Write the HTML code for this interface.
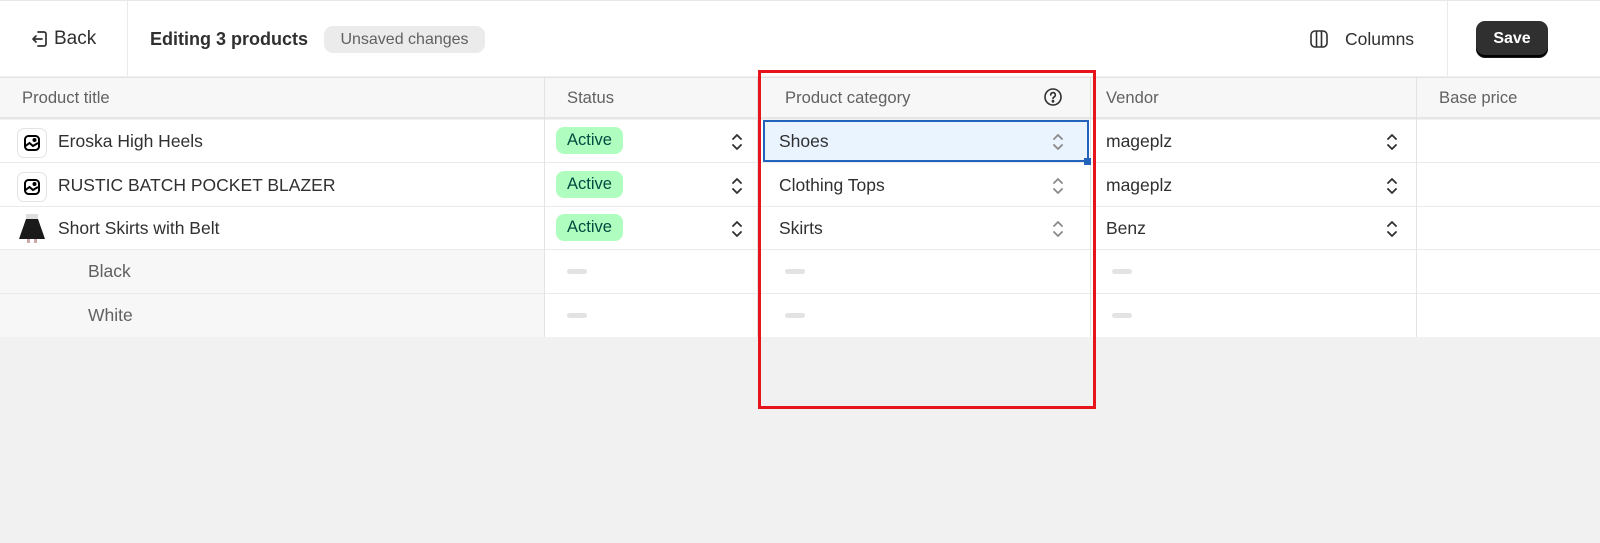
<!DOCTYPE html>
<html><head><style>
*{margin:0;padding:0;box-sizing:border-box}
body{width:1600px;height:543px;background:#f1f1f1;font-family:"Liberation Sans",sans-serif;position:relative;overflow:hidden;color:#303030}
.a{position:absolute}
.t{font-size:17.5px;color:#303030;white-space:nowrap}
.h{font-size:16.6px;color:#616161;white-space:nowrap}
.vl{position:absolute;width:1px;background:#e3e3e3}
.hl{position:absolute;height:1px;background:#ebebeb;left:0;width:1600px}
.pill{position:absolute;background:#affebf;color:#014b40;font-size:16.5px;border-radius:8px;padding:0 11px;height:27px;line-height:27px}
.dash{position:absolute;width:20px;height:5px;border-radius:3px;background:#e3e3e3}
</style></head><body>
<div class="a" style="left:0;top:0;width:1600px;height:76px;background:#fff;border-top:1px solid #e8e8e8"></div>
<div class="vl" style="left:127px;top:0;height:76px;background:#ebebeb"></div>
<div class="vl" style="left:1447px;top:0;height:76px;background:#ebebeb"></div>
<svg class="a" style="left:31px;top:29px" width="18" height="20" viewBox="0 0 18 20" fill="none" stroke="#303030" stroke-width="1.7" stroke-linecap="round" stroke-linejoin="round"><path d="M7 3h6a2 2 0 0 1 2 2v10a2 2 0 0 1-2 2H7"/><path d="M11 10H2M5 7l-3 3 3 3"/></svg>
<div class="a t" style="left:54px;top:28px;font-size:19px">Back</div>
<div class="a t" style="left:150px;top:29px;font-size:18px;font-weight:bold">Editing 3 products</div>
<div class="a" style="left:324px;top:26px;width:161px;height:27px;background:#ebebeb;border-radius:9px;color:#616161;font-size:16px;line-height:27px;text-align:center">Unsaved changes</div>
<svg class="a" style="left:1309px;top:29px" width="20" height="20" viewBox="0 0 20 20" fill="none" stroke="#303030" stroke-width="1.6"><rect x="2" y="2" width="16" height="16" rx="4"/><path d="M7.5 2v16M12.5 2v16"/></svg>
<div class="a t" style="left:1345px;top:29px">Columns</div>
<div class="a" style="left:1476px;top:21px;width:72px;height:36px;background:#303030;border-radius:9px;box-shadow:inset 0 -2px 0 #000,0 1px 0 #1a1a1a;color:#fff;font-weight:bold;font-size:16px;line-height:35px;text-align:center">Save</div>

<div class="a" style="left:0;top:77px;width:1600px;height:42px;background:#f7f7f7;border-top:1px solid #e3e3e3;border-bottom:2px solid #e6e6e6"></div>
<div class="a" style="left:0;top:120px;width:1600px;height:217px;background:#fff"></div>
<div class="a" style="left:0;top:250px;width:544px;height:87px;background:#f7f7f7"></div>
<div class="hl" style="top:162px"></div><div class="hl" style="top:206px"></div><div class="hl" style="top:249px"></div><div class="hl" style="top:293px"></div>
<div class="vl" style="left:544px;top:77px;height:260px"></div>
<div class="vl" style="left:757px;top:77px;height:260px"></div>
<div class="vl" style="left:1090px;top:77px;height:260px"></div>
<div class="vl" style="left:1416px;top:77px;height:260px"></div>

<div class="a h" style="left:22px;top:88px">Product title</div>
<div class="a h" style="left:567px;top:88px">Status</div>
<div class="a h" style="left:785px;top:88px">Product category</div>
<svg class="a" style="left:1043px;top:87px" width="20" height="20" viewBox="0 0 20 20" fill="none" stroke="#303030" stroke-width="1.6"><circle cx="10" cy="10" r="8"/><path d="M7.7 8a2.3 2.3 0 1 1 3.3 2c-.7.4-1 .8-1 1.6" stroke-linecap="round"/><circle cx="10" cy="14.3" r=".6" fill="#303030"/></svg>
<div class="a h" style="left:1106px;top:88px">Vendor</div>
<div class="a h" style="left:1439px;top:88px">Base price</div>

<div class="a" style="left:17px;top:128px;width:30px;height:30px;border:1px solid #e3e3e3;border-radius:7px;background:#fff"></div>
<div class="a" style="left:17px;top:172px;width:30px;height:30px;border:1px solid #e3e3e3;border-radius:7px;background:#fff"></div>
<svg class="a" style="left:23px;top:134px" width="18" height="18" viewBox="0 0 18 18" fill="none" stroke="#000" stroke-width="2"><rect x="2" y="2" width="14" height="14" rx="3.5"/><path d="M2.5 12l4-3 3.5 3 5-3"/><circle cx="11.5" cy="6" r="1" fill="#000"/></svg>
<svg class="a" style="left:23px;top:178px" width="18" height="18" viewBox="0 0 18 18" fill="none" stroke="#000" stroke-width="2"><rect x="2" y="2" width="14" height="14" rx="3.5"/><path d="M2.5 12l4-3 3.5 3 5-3"/><circle cx="11.5" cy="6" r="1" fill="#000"/></svg>
<svg class="a" style="left:17px;top:213px" width="30" height="30" viewBox="0 0 30 30"><rect x="9" y="1" width="12" height="6" fill="#ddd"/><path d="M9 6h12l7 20H2z" fill="#1a1a1a"/><rect x="10" y="26" width="3" height="4" fill="#caa"/><rect x="17" y="26" width="3" height="4" fill="#caa"/></svg>
<div class="a t" style="left:58px;top:131px">Eroska High Heels</div>
<div class="a t" style="left:58px;top:175px">RUSTIC BATCH POCKET BLAZER</div>
<div class="a t" style="left:58px;top:218px">Short Skirts with Belt</div>
<div class="a t" style="left:88px;top:261px;color:#616161">Black</div>
<div class="a t" style="left:88px;top:305px;color:#616161">White</div>

<div class="pill" style="left:556px;top:127px">Active</div>
<div class="pill" style="left:556px;top:171px">Active</div>
<div class="pill" style="left:556px;top:214px">Active</div>

<div class="a" style="left:763px;top:120px;width:326px;height:42px;background:#eaf4ff;border:2px solid #2463bc"></div>
<div class="a" style="left:1084px;top:158px;width:7px;height:7px;background:#2463bc"></div>
<div class="a t" style="left:779px;top:131px">Shoes</div>
<div class="a t" style="left:779px;top:175px">Clothing Tops</div>
<div class="a t" style="left:779px;top:218px">Skirts</div>
<div class="a t" style="left:1106px;top:131px">mageplz</div>
<div class="a t" style="left:1106px;top:175px">mageplz</div>
<div class="a t" style="left:1106px;top:218px">Benz</div>

<svg width="0" height="0" style="position:absolute"><defs><path id="ch" d="M2 5l4-4 4 4M2 11l4 4 4-4" fill="none" stroke-width="1.8" stroke-linecap="round" stroke-linejoin="round"/></defs></svg>
<svg class="a" style="left:731px;top:134px" width="12" height="16"><use href="#ch" stroke="#303030"/></svg>
<svg class="a" style="left:731px;top:178px" width="12" height="16"><use href="#ch" stroke="#303030"/></svg>
<svg class="a" style="left:731px;top:221px" width="12" height="16"><use href="#ch" stroke="#303030"/></svg>
<svg class="a" style="left:1052px;top:134px" width="12" height="16"><use href="#ch" stroke="#8a8a8a" stroke-width="1.3"/></svg>
<svg class="a" style="left:1052px;top:178px" width="12" height="16"><use href="#ch" stroke="#8a8a8a" stroke-width="1.3"/></svg>
<svg class="a" style="left:1052px;top:221px" width="12" height="16"><use href="#ch" stroke="#8a8a8a" stroke-width="1.3"/></svg>
<svg class="a" style="left:1386px;top:134px" width="12" height="16"><use href="#ch" stroke="#303030"/></svg>
<svg class="a" style="left:1386px;top:178px" width="12" height="16"><use href="#ch" stroke="#303030"/></svg>
<svg class="a" style="left:1386px;top:221px" width="12" height="16"><use href="#ch" stroke="#303030"/></svg>

<div class="dash" style="left:567px;top:269px"></div><div class="dash" style="left:567px;top:313px"></div>
<div class="dash" style="left:785px;top:269px"></div><div class="dash" style="left:785px;top:313px"></div>
<div class="dash" style="left:1112px;top:269px"></div><div class="dash" style="left:1112px;top:313px"></div>

<div class="a" style="left:758px;top:70px;width:338px;height:339px;border:3px solid #e8141c"></div>
</body></html>
